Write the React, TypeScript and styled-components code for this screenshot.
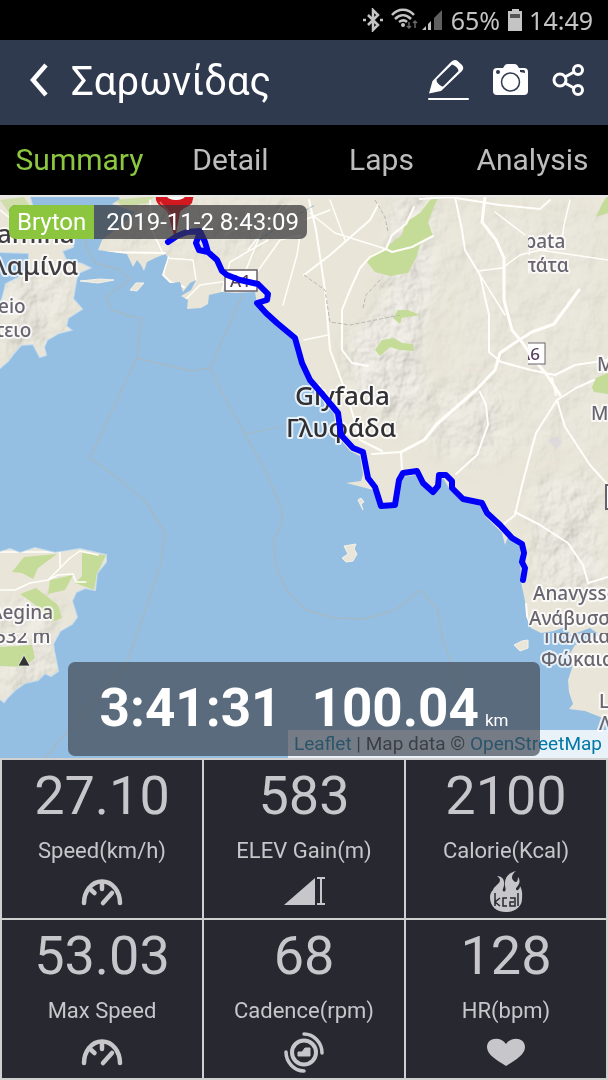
import React from "react";
import styled, { createGlobalStyle } from "styled-components";

const GlobalStyle = createGlobalStyle`
  * { box-sizing: border-box; }
  body { margin: 0; background: #000; font-family: Roboto, "Noto Sans", sans-serif; }
  button { font: inherit; color: inherit; background: none; border: 0; padding: 0; cursor: pointer; }
  h1, dl, dd, p { margin: 0; }
  svg { display: block; }
`;

const Screen = styled.div`
  display: flex;
  flex-direction: column;
  min-height: 100vh;
`;

const StatusBar = styled.div`
  display: flex;
  align-items: center;
  justify-content: flex-end;
  height: 40px;
  padding: 0 15px 0 0;
  background: #000;
  color: #c4c4c4;
  font: 25px/36px "Noto Sans", sans-serif;
`;

const StatusIcons = styled.svg`
  margin-right: 8px;
`;

const BatteryIcon = styled.svg`
  margin: 0 6px 0 8px;
`;

const Header = styled.header`
  display: flex;
  align-items: center;
  height: 85px;
  padding: 0 24px 6px 28px;
  background: #2f3a4f;
  color: #fff;
`;

const Title = styled.h1`
  flex: 1;
  margin: 0 0 0 21px;
  padding-top: 5px;
  font-size: 40px;
  line-height: 48px;
  font-weight: 400;
`;

const Actions = styled.div`
  display: flex;
  align-items: center;
  gap: 24px;
`;

const IconButton = styled.button`
  display: flex;
`;

const Tabs = styled.nav`
  display: grid;
  grid-template-columns: repeat(4, 1fr);
  height: 70px;
  padding-left: 4px;
  background: #000;
`;

const Tab = styled.button<{ $active?: boolean }>`
  font-size: 30px;
  line-height: 40px;
  color: ${(p) => (p.$active ? "#8dc641" : "#bdbdbd")};
`;

const MapPanel = styled.section`
  position: relative;
  flex: 1;
  min-height: 562px;
  border-top: 2px solid #e8e8e8;
  overflow: hidden;
  background: #94bfe2;
`;

const MapCanvas = styled.svg`
  position: absolute;
  inset: 0;
  width: 100%;
  height: 100%;
`;

const DeviceTag = styled.div`
  position: absolute;
  top: 8px;
  left: 9px;
  display: flex;
  border-radius: 7px;
  overflow: hidden;
  color: #fff;
  font-size: 24px;
  line-height: 34px;
  background: rgba(52, 52, 56, 0.72);
`;

const Brand = styled.span`
  padding: 0 8px;
  background: #8cc63f;
`;

const DateText = styled.span`
  padding: 0 8px 0 12px;
`;

const Attribution = styled.p`
  position: absolute;
  right: 0;
  bottom: 0;
  padding: 0 6px;
  font-size: 19px;
  line-height: 28px;
  color: #333;
  background: rgba(255, 255, 255, 0.8);
  a { color: #0078a8; text-decoration: none; }
`;

const RideTotals = styled.div`
  position: absolute;
  left: 68px;
  right: 68px;
  bottom: 2px;
  display: flex;
  justify-content: center;
  align-items: baseline;
  height: 94px;
  border-radius: 7px;
  color: #fff;
  font-size: 53px;
  line-height: 92px;
  font-weight: 700;
  background: rgba(64, 68, 78, 0.68);
`;

const Distance = styled.span`
  margin-left: 30px;
`;

const Unit = styled.span`
  margin-left: 6px;
  font-size: 17px;
  font-weight: 400;
`;

const Stats = styled.dl`
  display: grid;
  grid-template-columns: repeat(3, 1fr);
  gap: 2px;
  padding: 2px;
  background: #d0d0d0;
`;

const Stat = styled.div`
  display: flex;
  flex-direction: column-reverse;
  align-items: center;
  justify-content: flex-end;
  height: 158px;
  padding-top: 4px;
  background: #282831;
  color: #c6c6cb;
`;

const StatValue = styled.dd`
  font-size: 54px;
  line-height: 64px;
`;

const StatLabel = styled.dt`
  display: flex;
  flex-direction: column;
  align-items: center;
  padding-top: 8px;
  font-size: 22px;
  line-height: 30px;
  svg { margin-top: 4px; }
`;

const GaugeIcon = () => (
  <svg width="46" height="46" viewBox="0 0 46 46" fill="none" stroke="#c6c6cb" strokeWidth="4.500" strokeLinecap="round" aria-hidden="true">
    <path d="M5 33C5 22 12 11.500 23 11.500S41 22 41 33" />
    <path d="M23 12v7M11 19l4.500 4M24 33l9-10" />
  </svg>
);

const ElevationIcon = () => (
  <svg width="46" height="46" viewBox="0 0 46 46" fill="#c6c6cb" aria-hidden="true">
    <path d="M3 35L34 8v27z" />
    <path d="M36 7h8v2h-3v24h3v2h-8v-2h3V9h-3z" />
  </svg>
);

const FlameIcon = () => (
  <svg width="46" height="46" viewBox="0 0 46 46" aria-hidden="true">
    <path fill="#c6c6cb" d="M10 20c1-4 7-6 7-10 0-2-2-3-3-4 5 0 8 4 7 9 0 3-2 4-1 6 3 2 3-2 2-5C21 8 25 3 33 1c-4 3-5 7-3 9 2 3 5 3 5-3 3 4 1 8-1 10-2 2-1 4 1 3 1-1 2-2 2-4 3 5 2 10 2 13 0 7-6 13-16 13S7 36 7 27c0-3 1-5 3-7z" />
    <g fill="none" stroke="#282831" strokeWidth="1.500">
      <path d="M12 23v13M17 28l-5 4 5 4M24 28h-4v8h4M27 28h5v8h-5v-4h4M35 23v13" />
    </g>
  </svg>
);

const CadenceIcon = () => (
  <svg width="46" height="46" viewBox="0 0 46 46" fill="none" stroke="#c6c6cb" strokeWidth="4" aria-hidden="true">
    <circle cx="23" cy="22.500" r="12" />
    <path d="M23 4C33 4 41 13 41 23M23 41C13 41 5 32 5 22" strokeLinecap="round" strokeWidth="3.500" />
    <path d="M17 22h4l3-4h5v8H17z" fill="#c6c6cb" strokeWidth="1" />
  </svg>
);

const HeartIcon = () => (
  <svg width="46" height="46" viewBox="0 0 46 46" fill="#c6c6cb" aria-hidden="true">
    <path d="M23 36C14 30 4 25 4 17 4 7 18 6 23 14 28 6 42 7 42 17c0 8-10 13-19 19z" />
  </svg>
);

const MAINLAND =
  "M113 190L120 199 112 204 135 212 120 226 102 240 98 250 127 254 133 267 137 260 141 265 144 271 147 262 155 258 165 254 168 257 162 275 170 283 180 282 183 292 190 283 196 280 191 290 181 296 188 300 187 309 201 308 208 304 209 295 222 292 235 293 255 292 257 304 272 321 293 340 300 365 310 384 334 414 337 436 350 451 360 456 363 474 361 481 346 483 362 487 373 490 380 508 396 507 402 477 416 475 424 487 434 494 443 478 450 490 463 502 480 506 485 516 502 533 505 545 508 537 520 547 521 582 525 601 526 616 531 628 541 633 554 631 565 627 571 635 590 628 600 635 575 645 568 657 573 665 568 680 569 692 573 704 569 709 585 711 608 720V190z";
const SALAMINA =
  "M0 190H28L32 205 50 215 62 228 74 234 73 247 62 251 66 260 82 264 90 268 78 273 76 281 73 299 82 309 68 318 66 326 71 330 59 333 47 340 44 347 46 355 40 357 33 344 21 345 14 353 8 361 0 368V305L3 296 6 284 20 277 29 268 29 253 0 252z";
const AEGINA =
  "M0 552L10 549 20 553 35 548 55 553 80 549 106 555 106 562 97 573 95 590 85 588 76 592 72 601 77 617 72 624 60 631 53 644 54 651 58 671 51 676 45 673 38 680 25 683 15 690 8 697 4 702 0 699z";

const ROUTE =
  "M168 242L177 236 187 232 200 231 205 242 208 252 199 250 196 243 200 232M208 252L217 260 222 271 227 275 240 280 258 284 268 294 267 300 257 303 266 313 277 323 295 338 302 363 310 380 323 395 338 413 341 435 353 448 363 452 368 478 375 487 381 506 395 505 399 480 403 473 417 471 423 483 433 492 438 486 439 475 446 475 452 481 452 488 463 499 482 503 487 513 500 525 512 538 522 544 524 553 522 562 525 568 523 580";

const HaloText = styled.text<{ $size: number; $tone?: string }>`
  font-family: "Noto Sans", sans-serif;
  font-size: ${(p) => p.$size}px;
  font-weight: 500;
  fill: ${(p) => p.$tone ?? "#696570"};
  stroke: rgba(255, 255, 255, 0.75);
  stroke-width: 4px;
  stroke-linejoin: round;
  paint-order: stroke;
`;

const RideMap = () => (
  <MapCanvas viewBox="0 197 608 561" preserveAspectRatio="xMidYMid slice" role="img" aria-label="Ride map">
    <defs>
      <clipPath id="land"><path d={MAINLAND} /><path d={SALAMINA} /><path d={AEGINA} /></clipPath>
      <clipPath id="eastTile"><rect x="528" y="190" width="80" height="443" /></clipPath>
      <clipPath id="southTile"><rect x="528" y="633" width="80" height="130" /></clipPath>
      <clipPath id="heightTile"><rect x="0" y="633" width="80" height="30" /></clipPath>
      <filter id="relief" x="0" y="0" width="100%" height="100%">
        <feTurbulence type="fractalNoise" baseFrequency="0.035 0.03" numOctaves="4" seed="8" result="n" />
        <feDiffuseLighting in="n" surfaceScale="7" lightingColor="#fff"><feDistantLight azimuth="225" elevation="52" /></feDiffuseLighting>
      </filter>
      <filter id="soft" x="-30%" y="-30%" width="160%" height="160%"><feGaussianBlur stdDeviation="9" /></filter>
      <mask id="hills">
        <g fill="#fff" filter="url(#soft)">
          <path d="M395 197H435V290L420 350 430 400 400 430 350 390 345 340 380 310z" />
          <path d="M530 480L600 470 608 600 530 590z" opacity=".8" />
          <path d="M430 390L500 380 510 450 470 470 420 440z" opacity=".6" />
          <path d="M0 270L80 270 60 340 0 360zM0 600L60 600 60 690 0 700z" opacity=".7" />
          <path d="M100 200L300 200 250 260 110 250z" opacity=".5" />
          <path d="M440 197H608V460H440z" opacity=".3" />
        </g>
      </mask>
    </defs>
    <path fill="none" stroke="#fff" strokeOpacity=".45" strokeWidth="2" d={SALAMINA + AEGINA} />
    <path fill="#e9e5d8" d={MAINLAND} />
    <path fill="#e9e5d8" d={SALAMINA + AEGINA} />
    <g fill="#e9e5d8" stroke="#f4f1e8" strokeWidth="1">
      <path d="M80 281L100 279 114 280 98 283zM130 290L136 283 144 283 137 291zM344 546L356 544 354 549 357 554 353 561 346 562 342 558 348 554zM514 645L522 641 528 640V648L520 651zM358 500L361 498 364 502 361 504 363 510z" />
    </g>
    <g clipPath="url(#land)">
      <g mask="url(#hills)"><rect y="190" width="608" height="568" filter="url(#relief)" style={{ mixBlendMode: "multiply" }} opacity=".42" /></g>
      <g fill="#c5db98">
        <path d="M431 199L438 197 428 222 433 236 420 245 416 258 408 273 390 276 375 272 367 262 371 255 385 248 402 235 405 223 420 213z" />
        <path d="M393 318L398 310 408 310 420 315 402 318 400 324zM375 350L382 340 394 338 402 343 413 344 414 351 400 350 390 347 380 356zM596 217L602 204 608 195V213zM592 387L596 378 608 373V394L594 392z" />
        <path d="M115 200L155 196 148 203 124 207z" opacity=".8" />
        <path d="M12 572L24 557 57 554 38 568 33 579 22 573zM82 553L106 555 97 574 94 590 75 583 82 576zM20 594L36 588 58 605 62 618 52 622 40 608zM50 580L73 575 65 590 48 594zM0 647L32 645 35 658 24 667 0 666z" />
        <path d="M0 200L24 197 34 212 10 214z" opacity=".7" />
      </g>
      <path fill="#d8d3dd" opacity=".6" d="M548 440L558 436 562 443 556 450z" />
      <g fill="none" stroke="#fffefa" strokeLinecap="round" strokeLinejoin="round">
        <g strokeWidth="3">
          <path d="M455 197L462 230 465 250 480 275 489 315 489 352 501 362 531 370 555 375 575 365 608 360" strokeWidth="2" />
          <path d="M485 197L482 222 496 240 504 258 504 300 512 330 522 342 532 357 547 375 560 395" />
          <path d="M579 290L554 324 532 332 516 342 500 353 495 370 476 390 437 424 424 440 401 452" />
          <path d="M420 199L450 197 500 205 540 209 550 200M304 275L330 255 370 220 378 205M309 200L316 230 325 290 330 350 345 390" strokeWidth="2" />
          <path d="M433 236L412 247 392 252 386 249 370 257 360 268 350 290 342 310 342 350 352 363 368 366M386 249L392 235 406 224 414 207" strokeWidth="2" />
          <path d="M557 400L536 433 522 485 515 515 504 524M557 400L565 427 590 465 608 485M557 400L576 388 594 380M556 395L552 378" strokeWidth="2" />
          <path d="M401 452L402 470M382 451L360 440 350 405M401 452L372 454M480 392L486 405 488 425 477 455 456 474" strokeWidth="2" />
          <path d="M515 512L540 525 568 543 583 565 588 583 608 577" strokeWidth="2" />
          <path d="M526 604L528 626M98 252L165 253M168 257L163 275 170 282 184 287" strokeWidth="2" />
        </g>
        <g strokeWidth="1.500">
          <path d="M480 275L505 315M478 271L502 268 520 255 540 250 608 260M495 212L525 235M570 200L564 225 562 240" />
          <path d="M304 220L330 210M310 213L335 233 370 244 386 249M330 200L345 240M304 340L328 335M240 285L262 230 290 205M248 250L283 205M225 235L258 215M255 275L280 240 300 235 297 255 283 305" />
          <path d="M150 200L152 230 165 258 193 260 196 280M185 300L200 285 235 280M222 291L230 262 268 240" />
          <path d="M0 590L15 590 30 583 48 580 58 575 73 574 76 582 86 582M48 580L70 558 80 551 98 555M0 552L60 552 60 568 48 580M0 236L40 240 78 235M0 210L25 230" />
        </g>
      </g>
      <g fill="none" stroke="#b8b7b2" strokeWidth="1" strokeDasharray="4 2">
        <path d="M304 275L325 290 330 322 350 325 385 318 400 315M375 200L385 217 388 232M363 308L366 295 380 280" />
        <path d="M260 240L285 222 315 205" stroke="#91b4cd" />
      </g>
    </g>
    <g fill="none" stroke="#a4b9c5" strokeWidth="1.500" strokeLinejoin="round">
      <path d="M88 205L85 245 95 263 120 270 130 279 106 297 112 310 130 316 141 318 137 358 117 400 90 458 120 480 146 502 165 533 160 567 143 617 126 665 100 695 60 740 45 758" />
      <path d="M137 358L165 365 192 371 210 368 242 296M210 368L225 398 245 434 268 476 282 510 282 522 273 541 276 567 286 590 306 610 335 618 365 619 395 610 420 590 437 608 443 640 450 660 465 690" />
      <path d="M245 434L285 426" strokeDasharray="4 1" />
    </g>
    <g>
      <HaloText $size={26} $tone="#3f3d42" x="-3" y="243">amina</HaloText>
      <HaloText $size={26} $tone="#3f3d42" x="-7" y="275">λαμίνα</HaloText>
      <HaloText $size={19} x="-2" y="313">eio</HaloText>
      <HaloText $size={19} x="-5" y="337">τειο</HaloText>
      <HaloText $size={26} $tone="#303034" x="295" y="405">Glyfada</HaloText>
      <HaloText $size={26} $tone="#303034" x="286" y="437">Γλυφάδα</HaloText>
      <HaloText $size={19} x="-10" y="619">Aegina</HaloText>
    </g>
    <g clipPath="url(#heightTile)"><HaloText $size={19} x="-5" y="643">532 m</HaloText></g>
    <path d="M24 655l6 11H18z" fill="#333" stroke="#fff" strokeOpacity=".7" strokeWidth="1" />
    <g clipPath="url(#eastTile)">
      <HaloText $size={19} x="514" y="248">Spata</HaloText>
      <HaloText $size={19} x="512" y="272">Σπάτα</HaloText>
      <rect x="510" y="343" width="35" height="21" fill="#fff" stroke="#6a606c" />
      <HaloText $size={17} $tone="#5b3f61" x="519" y="360">A6</HaloText>
      <HaloText $size={19} x="597" y="371">Markopoulo</HaloText>
      <HaloText $size={19} x="591" y="420">Μαρκόπουλο</HaloText>
      <HaloText $size={19} x="533" y="600">Anavyssos</HaloText>
      <HaloText $size={19} x="529" y="625">Ανάβυσσος</HaloText>
      <path d="M608 485h-2v24h2" fill="#fff" stroke="#6a606c" strokeWidth="2" />
    </g>
    <g clipPath="url(#southTile)">
      <HaloText $size={19} x="544" y="643">Παλαιά</HaloText>
      <HaloText $size={19} x="541" y="666">Φώκαια</HaloText>
      <HaloText $size={19} x="599" y="708">Legrena</HaloText>
      <HaloText $size={19} x="599" y="730">Λεγρενά</HaloText>
    </g>
    <g>
      <rect x="225" y="270" width="32" height="21" fill="#fff" stroke="#6a606c" strokeWidth="1.500" />
      <HaloText $size={17} $tone="#5b3f61" x="230" y="287">A1</HaloText>
    </g>
    <path fill="#d31920" d="M155 190H195L192 203C189 207 182 208 180 212L175 239 168 213C165 207 158 207 156 200z" />
    <path fill="none" stroke="#f1686a" strokeWidth="1.500" d="M160 202C165 209 168 208 171 216" />
    <ellipse cx="176" cy="196" rx="9" ry="4" fill="#fff" />
    <path d={ROUTE} fill="none" stroke="#0000fa" strokeWidth="6" strokeLinecap="round" strokeLinejoin="round" />
  </MapCanvas>
);

const stats = [
  { value: "27.10", label: "Speed(km/h)", Icon: GaugeIcon },
  { value: "583", label: "ELEV Gain(m)", Icon: ElevationIcon },
  { value: "2100", label: "Calorie(Kcal)", Icon: FlameIcon },
  { value: "53.03", label: "Max Speed", Icon: GaugeIcon },
  { value: "68", label: "Cadence(rpm)", Icon: CadenceIcon },
  { value: "128", label: "HR(bpm)", Icon: HeartIcon },
];

export default function App() {
  return (
    <Screen>
      <GlobalStyle />
      <StatusBar>
        <StatusIcons width="80" height="24" viewBox="0 0 80 24" fill="none" aria-hidden="true">
          <path d="M5 7l10 10-5 5V2l5 5L5 17" stroke="#c4c4c4" strokeWidth="2.500" />
          <path d="M0 12h3M17 12h3" stroke="#c4c4c4" strokeWidth="2.500" />
          <path d="M29 7C35 0 45 0 51 7M32 11c5-5 11-5 16 0M36 14c3-2 6-2 8 0" stroke="#c4c4c4" strokeWidth="2.500" />
          <circle cx="40" cy="17" r="2" fill="#c4c4c4" />
          <path d="M46 14v6M44 18l2 2 2-2M52 20v-7M50 15l2-2 2 2" stroke="#666" strokeWidth="1.500" />
          <path d="M59 22l4-4v4zM65 22v-6l3-3v9z" fill="#c4c4c4" />
          <path d="M71 22V10l8-8v20z" fill="#606060" />
        </StatusIcons>
        65%
        <BatteryIcon width="15" height="22" viewBox="0 0 15 22" aria-hidden="true">
          <path d="M4 0h7v2h3v20H0V2h4z" fill="#c4c4c4" />
          <path d="M2 5h10v4H2z" fill="#555" />
        </BatteryIcon>
        14:49
      </StatusBar>
      <Header>
        <IconButton aria-label="Back">
          <svg width="22" height="36" viewBox="0 0 22 36" fill="none" stroke="#fff" strokeWidth="4.500">
            <path d="M18 3L5 18 18 33" />
          </svg>
        </IconButton>
        <Title>Σαρωνίδας</Title>
        <Actions>
          <IconButton aria-label="Edit">
            <svg width="41" height="42" viewBox="0 0 41 42">
              <path fill="#fff" fillRule="evenodd" d="M23 3Q26 0 29 1.500L34 6Q36.500 9 34 12L13 32 1 34.500 4.500 22zM24 5.500L8.500 20.500Q8 23 11 25.500T15 27.500L30.500 12Q30 7.500 24 5.500z" />
              <path stroke="#fff" strokeWidth="2" strokeLinecap="round" d="M1 40h39" />
            </svg>
          </IconButton>
          <IconButton aria-label="Take photo">
            <svg width="35" height="32" viewBox="0 0 35 32">
              <path fill="#fff" d="M4 4h6l2-3q1-1 3-1h6q2 0 3 1l2 3h5q4 0 4 4v19q0 4-4 4H4q-4 0-4-4V8q0-4 4-4z" />
              <circle cx="17.500" cy="18" r="9" fill="none" stroke="#2f3a4f" strokeWidth="1.500" />
              <circle cx="5" cy="8" r="2" fill="#2f3a4f" />
              <path d="M27 6h4q1 0 1 3l-5-1z" fill="#2f3a4f" />
            </svg>
          </IconButton>
          <IconButton aria-label="Share">
            <svg width="32" height="32" viewBox="0 0 32 32" fill="none" stroke="#fff" strokeWidth="3">
              <circle cx="8" cy="16" r="6" />
              <circle cx="26" cy="6" r="4.500" />
              <circle cx="26" cy="26" r="4.500" />
              <path d="M13 13l9-5M13 19l9 5" />
            </svg>
          </IconButton>
        </Actions>
      </Header>
      <Tabs>
        <Tab $active aria-current="page">Summary</Tab>
        <Tab>Detail</Tab>
        <Tab>Laps</Tab>
        <Tab>Analysis</Tab>
      </Tabs>
      <MapPanel>
        <RideMap />
        <DeviceTag>
          <Brand>Bryton</Brand>
          <DateText>2019-11-2 8:43:09</DateText>
        </DeviceTag>
        <Attribution>
          <a href="#leaflet">Leaflet</a> | Map data © <a href="#osm">OpenStreetMap</a>
        </Attribution>
        <RideTotals>
          <span>3:41:31</span>
          <Distance>100.04</Distance>
          <Unit>km</Unit>
        </RideTotals>
      </MapPanel>
      <Stats>
        {stats.map(({ value, label, Icon }) => (
          <Stat key={label}>
            <StatLabel>
              {label}
              <Icon />
            </StatLabel>
            <StatValue>{value}</StatValue>
          </Stat>
        ))}
      </Stats>
    </Screen>
  );
}
